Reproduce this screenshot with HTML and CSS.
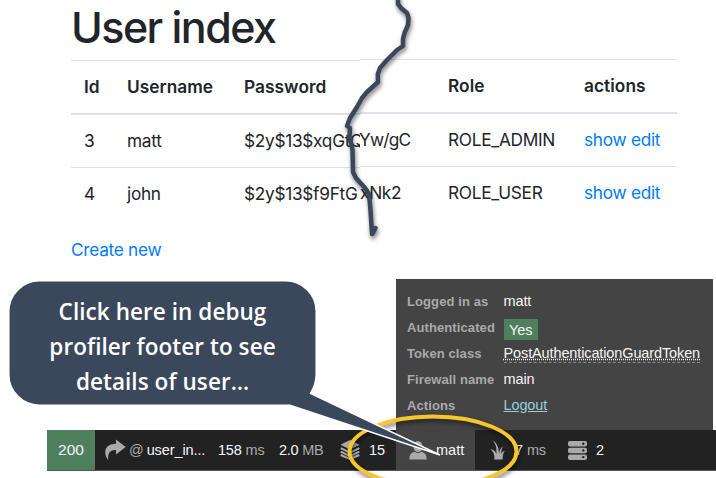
FILE: index.html
```html
<!DOCTYPE html>
<html lang="en">
<head>
<meta charset="utf-8">
<title>User index</title>
<link rel="stylesheet" href="styles.css">
</head>
<body>
<main class="page">
  <h1 class="title"><span>User index</span></h1>
  <div class="tables">
    <div class="grid grid-left">
      <div class="row head"><b>Id</b><b>Username</b><b>Password</b></div>
      <div class="row"><span>3</span><span>matt</span><span>$2y$13$xqGtQ</span></div>
      <div class="row"><span>4</span><span>john</span><span>$2y$13$f9FtG</span></div>
    </div>
    <div class="grid grid-right">
      <div class="row head"><b></b><b>Role</b><b>actions</b></div>
      <div class="row"><span class="tail">Yw/gC</span><span>ROLE_ADMIN</span><span class="links"><a>show</a> <a>edit</a></span></div>
      <div class="row"><span>xNk2</span><span>ROLE_USER</span><span class="links"><a>show</a> <a>edit</a></span></div>
    </div>
  </div>
  <a class="create">Create new</a>
</main>

<section class="profiler">
  <div class="info">
    <div class="info-row"><b>Logged in as</b><span>matt</span></div>
    <div class="info-row"><b>Authenticated</b><span class="yes">Yes</span></div>
    <div class="info-row"><b>Token class</b><span><abbr>PostAuthenticationGuardToken</abbr></span></div>
    <div class="info-row"><b>Firewall name</b><span>main</span></div>
    <div class="info-row"><b>Actions</b><span><a class="logout">Logout</a></span></div>
  </div>
  <div class="toolbar">
    <div class="status">200</div>
    <div class="block route">
      <svg width="22" height="22" viewBox="0 0 22 22"><path d="M12 0.5L21.7 8L12 15.5V11C6.500 10.500 3.500 14 4.200 21.200C-1.200 14 0.500 4.600 12 4.700Z"/></svg>
      <i>@</i><span>user_in...</span>
    </div>
    <div class="block time"><span>158</span><i>ms</i></div>
    <div class="block memory"><span>2.0</span><i>MB</i></div>
    <div class="block cache">
      <svg width="20" height="20" viewBox="0 0 20 20"><path d="M10 0L19.500 4.700L10 9.500L0.500 4.700Z"/><path class="line" d="M0.700 8.200L10 12.700L19.300 8.200M0.700 11.600L10 16.100L19.300 11.600M0.700 15L10 19L19.300 15"/></svg>
      <span>15</span>
    </div>
    <div class="block user">
      <svg width="18" height="19" viewBox="0 0 18 19"><ellipse cx="9" cy="5.500" rx="4.500" ry="5.500"/><path d="M0.400 18.500C0.200 13.800 2 11.800 5.600 10.700Q9 13.200 12.400 10.700C16 11.800 17.800 13.800 17.600 18.500Z"/></svg>
      <span>matt</span>
    </div>
    <div class="block twig">
      <svg width="15" height="20" viewBox="0 0 15 20"><path d="M4.300 19.500C5 15 3.600 11.500 0.300 9.300C3.300 9.600 5.500 11 6.400 14C6.900 8 5.800 3.500 2.200 0C6.600 2.500 9 7.500 9.200 14.500C9.500 11.500 9.600 9 12.800 6.200C11.300 9.800 11.200 11.500 11.500 14C12.200 12.200 13 11.300 14.800 10.800C13.200 13 12.700 15.500 12.600 19.500Z"/></svg>
      <span>7</span><i>ms</i>
    </div>
    <div class="block db">
      <svg width="19" height="19" viewBox="0 0 19 19"><rect width="19" height="5.500" rx="2"/><rect y="6.700" width="19" height="5.500" rx="2"/><rect y="13.400" width="19" height="5.500" rx="2"/><g class="dots"><circle cx="15.300" cy="2.700" r="1.200"/><circle cx="15.300" cy="9.400" r="1.200"/><circle cx="15.300" cy="16.100" r="1.200"/></g></svg>
      <span>2</span>
    </div>
  </div>
</section>

<svg class="overlay" width="716" height="478" viewBox="0 0 716 478">
  <g class="shadow">
    <path class="tear" d="M398 -3V4L401 8L407 13L408.500 18L408 25L404.500 33L403 39L403 46L397 50L387 60L380 68L377.800 74L378 82L367 92L362 98L357 107L350 118L347 126L350 128L349.500 137L352.500 150L353 172L356 178L365 188L369 194L370.500 210L372 234L375.500 228"/>
    <ellipse class="ring" cx="433" cy="451.500" rx="83.500" ry="35"/>
  </g>
  <path class="bubble" d="M40 280.800H285.500A30.700 30.700 0 0 1 316.200 311.500V374Q316.200 384 310.500 393.500L440 455L290 405.200H40A30.700 30.700 0 0 1 8.800 374.500V311.500A30.700 30.700 0 0 1 40 280.800Z"/>
</svg>
<div class="callout"><span>Click here in debug</span><span>profiler footer to see</span><span>details of user…</span></div>
</body>
</html>
```
FILE: styles.css
```css
* { box-sizing: border-box; }
body {
  margin: 0;
  width: 716px;
  height: 478px;
  overflow: hidden;
  position: relative;
  background: #fff;
  color: #212529;
  font-family: Inter, "Liberation Sans", sans-serif;
  font-size: 17.3px;
  line-height: 26px;
  letter-spacing: -0.3px;
}
.page { height: 279px; padding: 5px 39px 0 71px; }
.title {
  margin: 0;
  height: 55px;
  font-size: 43px;
  line-height: 45px;
  font-weight: 500;
  letter-spacing: -1.55px;
}
.tables { display: flex; margin-top: -1px; }
.grid-left { width: 289px; padding-top: 1px; overflow: hidden; }
.grid-right { width: 317px; }
.row {
  display: grid;
  height: 53px;
  align-items: center;
  border-top: 1px solid #dee2e6;
  white-space: nowrap;
}
.row.head { height: 55px; border-bottom: 2px solid #dee2e6; }
.row.head + .row { border-top: 0; height: 52px; }
.row b { font-weight: 600; letter-spacing: 0.05px; }
.grid-left .row { grid-template-columns: 43px 117px 1fr; padding-left: 13px; }
.grid-right .row { grid-template-columns: 88px 136px 1fr; }
.tail { margin-left: -1px; letter-spacing: -0.8px; }
.links, .create { color: #007bff; }
.create { display: block; margin-top: 17px; }

.profiler {
  width: 669px;
  margin-left: 47px;
  font-family: "Liberation Sans", Arial, sans-serif;
  font-size: 14.5px;
  letter-spacing: 0;
  color: #f5f5f5;
}
.info {
  width: 317px;
  height: 151px;
  margin-left: 349px;
  padding: 10px 0 0 11px;
  background: #444;
  letter-spacing: -0.12px;
}
.info-row { display: flex; height: 26px; line-height: 25px; }
.info-row b { width: 96.5px; font-size: 13px; color: #aaa; letter-spacing: 0.1px; }
.yes { height: 21px; margin-top: 4px; padding: 0 5.500px; line-height: 22px; background: #4f805d; }
abbr { border-bottom: 1px dashed #888; text-decoration: underline dotted; padding-bottom: 1px; }
.logout { color: #99cdd8; text-decoration: underline; }
.toolbar {
  display: flex;
  height: 41px;
  background: #222;
  line-height: 40px;
  border-bottom: 1px solid #555;
}
.status { width: 48px; background: #4f805d; text-align: center; font-size: 15.5px; }
.block { display: flex; align-items: center; white-space: nowrap; }
.block i { font-style: normal; color: #aaa; }
.block svg { fill: #aaa; flex: none; }
.line { fill: none; stroke: #aaa; stroke-width: 2; }
.dots { fill: #222; }
.route { width: 123px; padding-left: 9px; letter-spacing: -0.1px; }
.route i { margin: 0 3px; }
.time { width: 61px; gap: 4px; letter-spacing: -0.2px; }
.memory { width: 61px; gap: 4px; letter-spacing: -0.3px; }
.cache { width: 56px; gap: 9px; }
.user { width: 79px; padding-left: 13px; gap: 9px; background: #444; }
.twig { width: 93px; padding-left: 15px; }
.twig span { margin-left: 10px; }
.twig i { margin-left: 4px; letter-spacing: -0.4px; }
.db { gap: 9px; }

.overlay { position: absolute; left: 0; top: 0; }
.shadow { filter: drop-shadow(1px 3px 2px rgba(0, 0, 0, .5)); }
.tear { fill: none; stroke: #3b475b; stroke-width: 4.500; stroke-linecap: round; stroke-linejoin: round; }
.ring { fill: none; stroke: #f8c62c; stroke-width: 4; }
.bubble { fill: #3b475b; stroke: #fff; stroke-width: 1.500; }
.callout {
  position: absolute;
  left: 10px;
  top: 294px;
  width: 305px;
  display: flex;
  flex-direction: column;
  align-items: center;
  color: #fff;
  font: 600 22.5px/35px "Open Sans", sans-serif;
  letter-spacing: 0.06px;
  white-space: nowrap;
}
```
